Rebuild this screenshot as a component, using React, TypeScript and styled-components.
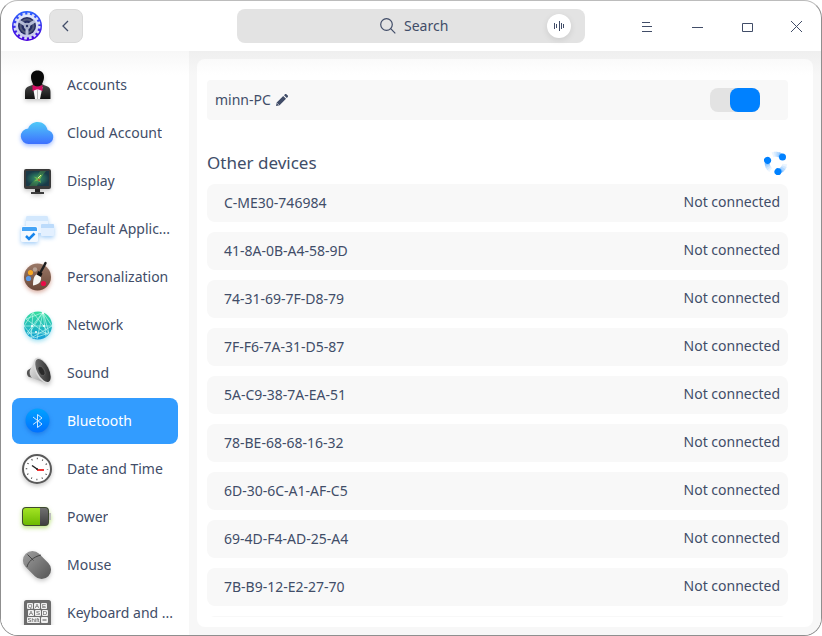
import React, { ReactNode } from "react";
import styled, { createGlobalStyle } from "styled-components";

const ink = "#414d68";

const GlobalStyle = createGlobalStyle`
  * { box-sizing: border-box; }
  html, body { margin: 0; background: #fff; }
  body, button, input {
    font-family: "Noto Sans", sans-serif;
    font-size: 14px;
    line-height: 20px;
    color: ${ink};
  }
  button { border: 0; padding: 0; background: none; cursor: pointer; }
  svg { display: block; flex: none; }
`;

const Window = styled.div`
  display: flex;
  flex-direction: column;
  height: 100vh;
  overflow: hidden;
  border: 1px solid #8f8f8f;
  border-top-color: #bcbcbc;
  border-radius: 18px;
  background: #fff;
`;

const TitleBar = styled.header`
  display: grid;
  grid-template-columns: 1fr minmax(0, 348px) 1fr;
  align-items: center;
  flex: none;
  height: 50px;
`;

const TitleStart = styled.div`
  display: flex;
  align-items: center;
  gap: 6px;
  padding-left: 10px;
`;

const BackButton = styled.button`
  display: grid;
  place-items: center;
  width: 34px;
  height: 34px;
  border: 1px solid #d9d9d9;
  border-radius: 8px;
  background: #e4e4e4;
`;

const SearchBox = styled.label`
  display: grid;
  grid-template-columns: 1fr auto 1fr;
  align-items: center;
  height: 34px;
  border-radius: 8px;
  background: #e3e3e3;
`;

const SearchCenter = styled.span`
  display: flex;
  grid-column: 2;
  align-items: center;
  gap: 8px;
  padding-left: 12px;
`;

const SearchInput = styled.input`
  width: 50px;
  padding: 0;
  border: 0;
  outline: 0;
  background: transparent;
  &::placeholder { color: ${ink}; opacity: 1; }
`;

const VoiceButton = styled.button`
  display: grid;
  place-items: center;
  justify-self: end;
  width: 24px;
  height: 24px;
  margin-right: 14px;
  border-radius: 50%;
  background: #fff;
  box-shadow: 0 2px 6px rgba(0, 0, 0, 0.1);
`;

const WindowButtons = styled.div`
  display: flex;
  justify-content: flex-end;
`;

const WindowButton = styled.button`
  display: grid;
  place-items: center;
  width: 50px;
  height: 50px;
`;

const Body = styled.div`
  display: flex;
  flex: 1;
  min-height: 0;
  background: linear-gradient(#efefef, #f7f7f7 24px);
`;

const Sidebar = styled.nav`
  flex: none;
  width: 188px;
  padding: 11px 11px 10px;
  background: linear-gradient(#f7f7f7, #fff 24px);
`;

const NavList = styled.div`
  display: flex;
  flex-direction: column;
  gap: 2px;
  height: 100%;
  overflow: hidden;
`;

const NavItem = styled.a<{ $active?: boolean }>`
  display: flex;
  flex: none;
  align-items: center;
  gap: 12px;
  height: 46px;
  padding: 0 4px 0 7px;
  border-radius: 8px;
  color: ${(p) => (p.$active ? "#fff" : ink)};
  background: ${(p) => (p.$active ? "#329cff" : "transparent")};
  text-decoration: none;
`;

const NavLabel = styled.span`
  overflow: hidden;
  white-space: nowrap;
  text-overflow: ellipsis;
`;

const Content = styled.main`
  flex: 1;
  min-width: 0;
  padding: 8px;
`;

const Panel = styled.div`
  height: 100%;
  padding: 21px 25px 10px 10px;
  border-radius: 8px;
  background: linear-gradient(#fafafa, #fff 16px);
`;

const PanelScroll = styled.div`
  height: 100%;
  overflow: hidden;
`;

const AdapterRow = styled.section`
  display: flex;
  align-items: center;
  gap: 4px;
  height: 40px;
  padding: 0 28px 0 8px;
  border-radius: 4px;
  background: #f8f8f8;
`;

const Switch = styled.input`
  appearance: none;
  display: flex;
  width: 50px;
  height: 24px;
  margin: 0 0 0 auto;
  border-radius: 8px;
  background: #e3e3e3;
  cursor: pointer;
  &::before {
    content: "";
    width: 30px;
    border-radius: 8px;
    background: #fff;
  }
  &:checked::before {
    margin-left: auto;
    background: #0081ff;
  }
`;

const SectionHead = styled.div`
  display: flex;
  align-items: center;
  justify-content: space-between;
  height: 42px;
  margin-top: 22px;
`;

const SectionTitle = styled.h2`
  margin: 0;
  font-size: 17px;
  line-height: 24px;
  font-weight: 400;
`;

const DeviceList = styled.ul`
  display: flex;
  flex-direction: column;
  gap: 10px;
  margin: 0;
  padding: 0;
  list-style: none;
`;

const DeviceButton = styled.button`
  display: flex;
  align-items: center;
  justify-content: space-between;
  width: 100%;
  height: 38px;
  padding: 0 8px 0 17px;
  border-radius: 8px;
  background: #f8f8f8;
`;

const DeviceStatus = styled.span`
  padding-bottom: 2px;
`;

const Shadowed = styled.svg<{ $glow?: string }>`
  overflow: visible;
  filter: drop-shadow(0 2px 2px ${(p) => p.$glow ?? "rgba(0,0,0,.22)"});
`;

function Icon({ children, glow }: { children: ReactNode; glow?: string }) {
  return (
    <Shadowed width="36" height="46" viewBox="0 0 36 46" fill="none" $glow={glow} aria-hidden="true">
      {children}
    </Shadowed>
  );
}

function Grad({ id, from, to, diagonal }: { id: string; from: string; to: string; diagonal?: boolean }) {
  return (
    <linearGradient id={id} x1="0" y1="0" x2={diagonal ? "1" : "0"} y2="1">
      <stop stopColor={from} />
      <stop offset="1" stopColor={to} />
    </linearGradient>
  );
}

const AccountsIcon = () => (
  <Icon>
    <Grad id="suit" from="#4a4a4a" to="#111" />
    <path d="M6 37v-7c0-4 2-5.500 6-6.500l3-1.500h8l3 1.500c4 1 5.500 2.500 5.500 6.500v7z" fill="url(#suit)" />
    <path d="M14 25l2 12h5l2.500-12z" fill="#f7f7f7" />
    <path d="M18.500 28v9" stroke="#bbb" />
    <path d="M12 15c0-4 2.500-6.500 6.500-6.500S25 11 25 15c0 3-1 4.500-1.500 6-.6 2-2.500 3.500-5 3.500s-4.500-1.500-5-3.500C13 19.500 12 18 12 15z" fill="#090909" />
    <path d="M13.500 23l4 1.500h2l4-1.500v6l-4-1.500h-2l-4 1.500z" fill="#d60a62" />
  </Icon>
);

const CloudIcon = () => (
  <Icon glow="rgba(50,110,255,.45)">
    <Grad id="cloud" from="#4fc9f8" to="#3d70ff" />
    <path d="M10 34a7.800 7.800 0 0 1-.8-15.600C10.500 14.500 14.500 12 18.700 12c5 0 8.800 3.200 9.900 8a7.100 7.100 0 0 1-.6 14z" fill="url(#cloud)" />
  </Icon>
);

const DisplayIcon = () => (
  <Icon>
    <radialGradient id="screen">
      <stop stopColor="#3c9468" />
      <stop offset=".6" stopColor="#246258" />
      <stop offset="1" stopColor="#1a3a48" />
    </radialGradient>
    <path d="M16 31h5v4h-5z" fill="#222" />
    <path d="M12 34h13v2H12z" fill="#3c3c3c" />
    <rect x="5" y="11" width="27" height="20" rx="2" fill="#3a3a3a" />
    <rect x="7" y="13" width="23" height="15" fill="url(#screen)" />
    <path d="M10 28l7-8 4-7h6l-6 8-3 7z" fill="#56a348" opacity=".4" />
    <path d="M14.500 18.500l4.500 1.500 5-4-3 5 1 4-3.500-2.500-3.500 1 2.500-2.500z" fill="#7fc04b" opacity=".85" />
    <path d="M19 20l3-3" stroke="#ddf29b" />
    <circle cx="20" cy="22" r="1" fill="#a44735" />
  </Icon>
);

const DefaultAppsIcon = () => (
  <Icon glow="rgba(60,150,240,.45)">
    <rect x="7" y="10" width="22" height="17" rx="1.500" fill="#eaf4ff" />
    <path d="M7 15v-3.500A1.500 1.500 0 0 1 8.500 10h19a1.500 1.500 0 0 1 1.500 1.500V15z" fill="#d3e8fd" />
    <rect x="22" y="18" width="13" height="12" rx="1" fill="#e3f0ff" />
    <path d="M22 22v-3a1 1 0 0 1 1-1h11a1 1 0 0 1 1 1v3z" fill="#bcdbfb" />
    <rect x="2" y="20" width="17" height="16" rx="1.500" fill="#f3f9ff" />
    <path d="M3 25v-3.500A1.500 1.500 0 0 1 4.500 21h12a1.500 1.500 0 0 1 1.500 1.500V25z" fill="#45a4f6" />
    <path d="M7 30l3 3 5.500-5.500" stroke="#1685ec" strokeWidth="2.500" />
  </Icon>
);

const PaletteIcon = () => (
  <Icon glow="rgba(160,50,20,.4)">
    <Grad id="palette" from="#9a7867" to="#6b4938" />
    <circle cx="18.500" cy="23" r="13.500" fill="url(#palette)" />
    <circle cx="16" cy="15.500" r="2.200" fill="#b7a296" />
    <circle cx="11.500" cy="18.500" r="2.600" fill="#f5a623" />
    <circle cx="9.500" cy="24.500" r="2.600" fill="#5b9bea" />
    <circle cx="24.500" cy="29.500" r="2.600" fill="#e80d46" />
    <path d="M20.500 20L25 12l1.500-3" stroke="#1d1d1d" strokeWidth="2.500" strokeLinecap="round" />
    <path d="M19 17l4.500 2.500-1.700 4-4-2z" fill="#111" />
    <path d="M17.500 20.500l4.500 2.500c.5 4-1.500 7.500-8 8.500 0-5 .5-9 3.500-11z" fill="#f6f6f2" />
  </Icon>
);

const NetworkIcon = () => (
  <Icon glow="rgba(20,180,220,.4)">
    <Grad id="globe" from="#34dd9c" to="#139ed9" />
    <circle cx="19" cy="23.500" r="14" fill="url(#globe)" />
    <g stroke="#d3fff5" strokeWidth=".7" opacity=".85">
      <path d="M5 24h28M8 31l16-21 6 21M14 10.500L5 24l10 12 15-5-16-20.500M24 10.500L9 33M24 10.500l3 24M14 10.500L12 36M24 10.500L33 24 12 36M7 17l22 16M7 17l17-6.500M24 10.500L18 37M8 31l22 0" />
    </g>
    <g fill="#fff">
      <circle cx="24" cy="11" r="1" /><circle cx="13" cy="24" r="1" /><circle cx="25" cy="24" r="1" /><circle cx="17" cy="30" r="1" />
    </g>
  </Icon>
);

const SoundIcon = () => (
  <Icon>
    <Grad id="horn" from="#eeeeee" to="#999" diagonal />
    <Grad id="cone" from="#777" to="#222" diagonal />
    <path d="M9 20l5-3 1 11-5-1c-2-1-3-5-1-7z" fill="#555" />
    <path d="M11 20l6-11 10 24-14-5c-2-2-3-5-2-8z" fill="url(#horn)" />
    <ellipse cx="23.500" cy="20.500" rx="7" ry="14" transform="rotate(-27 23.500 20.500)" fill="#d9d9d9" />
    <ellipse cx="24" cy="20.500" rx="5.800" ry="12.600" transform="rotate(-27 24 20.500)" fill="url(#cone)" />
    <ellipse cx="22.500" cy="21" rx="2.800" ry="5" transform="rotate(-27 22.500 21)" fill="#292929" stroke="#6e6e6e" strokeWidth=".6" />
  </Icon>
);

const BluetoothIcon = () => (
  <Icon glow="rgba(0,70,190,.35)">
    <Grad id="bt" from="#00a2ff" to="#0071ff" />
    <circle cx="18.500" cy="22.500" r="12" fill="url(#bt)" />
    <path d="M14 19l9 7-4.500 3.500v-13L23 20l-9 6.500" stroke="#cfe9ff" strokeWidth="1" />
  </Icon>
);

const ClockIcon = () => (
  <Icon>
    <circle cx="18" cy="23" r="14" fill="#fff" stroke="#5a5a5a" strokeWidth="2" />
    <circle cx="18" cy="23" r="10.500" stroke="#444" strokeWidth="1.500" strokeDasharray="1 4.498" strokeDashoffset=".5" />
    <path d="M18 23l-5-3.500" stroke="#222" strokeWidth="1.500" />
    <path d="M18 24h7" stroke="#ef3535" strokeWidth="2" />
    <circle cx="18" cy="23" r="1" fill="#222" />
  </Icon>
);

const PowerIcon = () => (
  <Icon glow="rgba(120,200,0,.5)">
    <Grad id="charge" from="#a3e324" to="#6cba00" />
    <Grad id="cell" from="#707070" to="#404040" />
    <path d="M29 19h3v7h-3z" fill="#bdbdbd" />
    <rect x="3" y="13" width="27" height="19" rx="4" fill="#3e4930" />
    <path d="M21 14h5a3 3 0 0 1 3 3v11a3 3 0 0 1-3 3h-5z" fill="url(#cell)" />
    <path d="M7 14h14v17H7a3 3 0 0 1-3-3V17a3 3 0 0 1 3-3z" fill="url(#charge)" />
  </Icon>
);

const MouseIcon = () => (
  <Icon>
    <Grad id="mouse" from="#989898" to="#5c5c5c" />
    <rect x="8.500" y="7" width="19" height="32" rx="9.500" transform="rotate(-45 18 23)" fill="url(#mouse)" />
    <path d="M8 25c1-5 6-10 14-12M8.500 12.500l6 6" stroke="#444" strokeWidth="1" />
  </Icon>
);

const KeyboardIcon = () => (
  <Icon>
    <rect x="5" y="10" width="27" height="27" rx="2.500" fill="#6c6c6c" />
    <g fill="#f0f0f0">
      <rect x="8" y="13" width="6" height="6" rx="1" /><rect x="15" y="13" width="6" height="6" rx="1" /><rect x="22" y="13" width="6" height="6" rx="1" />
      <rect x="9" y="20" width="6" height="6" rx="1" /><rect x="16" y="20" width="6" height="6" rx="1" /><rect x="23" y="20" width="6" height="6" rx="1" />
      <rect x="8" y="27" width="13" height="6" rx="1" /><rect x="22" y="27" width="7" height="6" rx="1" />
    </g>
    <g fill="#555" fontFamily="Liberation Sans, sans-serif" fontSize="6" textAnchor="middle">
      <text x="11" y="18">Q</text><text x="18" y="18">A</text><text x="25" y="18">E</text>
      <text x="12" y="25">A</text><text x="19" y="25">S</text><text x="26" y="25">D</text>
      <text x="14.500" y="32">Shift</text>
    </g>
    <path d="M23.500 30h4" stroke="#555" />
  </Icon>
);

const GearLogo = () => (
  <svg width="32" height="32" viewBox="0 0 32 32" fill="none" aria-hidden="true">
    <Grad id="disc" from="#2b62ff" to="#4a00dc" />
    <Grad id="ring" from="#e3eafd" to="#c6c7ea" />
    <circle cx="16" cy="16" r="15" fill="url(#disc)" />
    <circle cx="16" cy="16" r="12" stroke="#d6dcf6" strokeWidth="3" strokeDasharray="2.600 2.112" />
    <circle cx="16" cy="16" r="11.400" fill="url(#ring)" />
    <circle cx="16" cy="16" r="9" fill="#252c63" />
    <circle cx="16" cy="16" r="6.500" stroke="#515978" strokeWidth="2" />
    <path d="M16 16v9M16 16l-8-5M16 16l8-5" stroke="#b4bcd6" strokeWidth="3" />
    <circle cx="16" cy="16" r="3.200" fill="#a9b1ca" />
    <circle cx="16" cy="16" r="1.200" fill="#283265" />
  </svg>
);

const Spinner = () => (
  <svg width="24" height="24" viewBox="1 1 24 24" fill="none" role="img" aria-label="Scanning">
    {[0, 120, 240].map((angle) => (
      <g key={angle} transform={`rotate(${angle} 13 13)`} stroke="#0081ff" strokeWidth="5">
        <path d="M9.500 4.900A8.800 8.800 0 0 1 19 6.500" opacity=".08" />
        <path d="M11.500 4.300A8.800 8.800 0 0 1 19 6.500" opacity=".1" />
        <path d="M13.500 4.200A8.800 8.800 0 0 1 19 6.500" opacity=".14" />
        <path d="M15.500 4.600A8.800 8.800 0 0 1 19 6.500" opacity=".2" />
        <circle cx="19.500" cy="7" r="3.500" fill="#0081ff" stroke="none" />
      </g>
    ))}
  </svg>
);

const Pencil = () => (
  <svg width="14" height="14" viewBox="0 0 14 14" fill={ink} aria-hidden="true">
    <path d="M1 13l.7-3.600L8.200 3l2.800 2.800-6.400 6.500zM9 2.200l1-1c.4-.4 1-.4 1.400 0l1.400 1.400c.4.400.4 1 0 1.400l-1 1z" />
    <path d="M2.300 10.400l1.300 1.300" stroke="#f8f8f8" strokeWidth=".8" />
  </svg>
);

function ControlGlyph({ d }: { d: string }) {
  return (
    <svg width="14" height="14" viewBox="0 0 14 14" fill="none" stroke={ink} aria-hidden="true">
      <path d={d} />
    </svg>
  );
}

const windowControls = [
  { label: "Menu", d: "M3 3.500h8M3 7.500h10M3 12.500h10" },
  { label: "Minimize", d: "M3 8.500h11" },
  { label: "Maximize", d: "M3.500 4.500h10v8h-10z" },
  { label: "Close", d: "M2 2l11 11M13 2L2 13" },
];

const navItems: { label: string; icon: ReactNode; active?: boolean }[] = [
  { label: "Accounts", icon: <AccountsIcon /> },
  { label: "Cloud Account", icon: <CloudIcon /> },
  { label: "Display", icon: <DisplayIcon /> },
  { label: "Default Applic...", icon: <DefaultAppsIcon /> },
  { label: "Personalization", icon: <PaletteIcon /> },
  { label: "Network", icon: <NetworkIcon /> },
  { label: "Sound", icon: <SoundIcon /> },
  { label: "Bluetooth", icon: <BluetoothIcon />, active: true },
  { label: "Date and Time", icon: <ClockIcon /> },
  { label: "Power", icon: <PowerIcon /> },
  { label: "Mouse", icon: <MouseIcon /> },
  { label: "Keyboard and ...", icon: <KeyboardIcon /> },
];

const devices = [
  "C-ME30-746984",
  "41-8A-0B-A4-58-9D",
  "74-31-69-7F-D8-79",
  "7F-F6-7A-31-D5-87",
  "5A-C9-38-7A-EA-51",
  "78-BE-68-68-16-32",
  "6D-30-6C-A1-AF-C5",
  "69-4D-F4-AD-25-A4",
  "7B-B9-12-E2-27-70",
];

export default function App() {
  return (
    <>
      <GlobalStyle />
      <Window>
        <TitleBar>
          <TitleStart>
            <GearLogo />
            <BackButton aria-label="Back">
              <svg width="14" height="14" viewBox="0 0 14 14" fill="none" stroke={ink} strokeWidth="1.300">
                <path d="M9 2L4 7l5 5" />
              </svg>
            </BackButton>
          </TitleStart>
          <SearchBox>
            <SearchCenter>
              <svg width="16" height="16" viewBox="0 0 16 16" fill="none" stroke={ink} strokeWidth="1.200">
                <circle cx="6.500" cy="6.500" r="5.800" />
                <path d="M10.700 10.700l4.600 4.600" />
              </svg>
              <SearchInput placeholder="Search" aria-label="Search" />
            </SearchCenter>
            <VoiceButton aria-label="Voice search">
              <svg width="12" height="12" viewBox="0 0 12 12" fill="none" stroke={ink}>
                <path d="M1.500 3v6M3.500 4v4M6.500 1v10M8.500 3v6M10.500 4v4" />
              </svg>
            </VoiceButton>
          </SearchBox>
          <WindowButtons>
            {windowControls.map((control) => (
              <WindowButton key={control.label} aria-label={control.label}>
                <ControlGlyph d={control.d} />
              </WindowButton>
            ))}
          </WindowButtons>
        </TitleBar>
        <Body>
          <Sidebar aria-label="Settings">
            <NavList>
              {navItems.map((item) => (
                <NavItem key={item.label} href="#" $active={item.active} aria-current={item.active ? "page" : undefined}>
                  {item.icon}
                  <NavLabel>{item.label}</NavLabel>
                </NavItem>
              ))}
            </NavList>
          </Sidebar>
          <Content>
            <Panel>
              <PanelScroll>
                <AdapterRow>
                  <label htmlFor="adapter">minn-PC</label>
                  <button aria-label="Rename">
                    <Pencil />
                  </button>
                  <Switch id="adapter" type="checkbox" role="switch" defaultChecked />
                </AdapterRow>
                <SectionHead>
                  <SectionTitle>Other devices</SectionTitle>
                  <Spinner />
                </SectionHead>
                <DeviceList>
                  {devices.map((name) => (
                    <li key={name}>
                      <DeviceButton>
                        <span>{name}</span>
                        <DeviceStatus>Not connected</DeviceStatus>
                      </DeviceButton>
                    </li>
                  ))}
                  <li>
                    <DeviceButton aria-label="Unnamed device" />
                  </li>
                </DeviceList>
              </PanelScroll>
            </Panel>
          </Content>
        </Body>
      </Window>
    </>
  );
}
